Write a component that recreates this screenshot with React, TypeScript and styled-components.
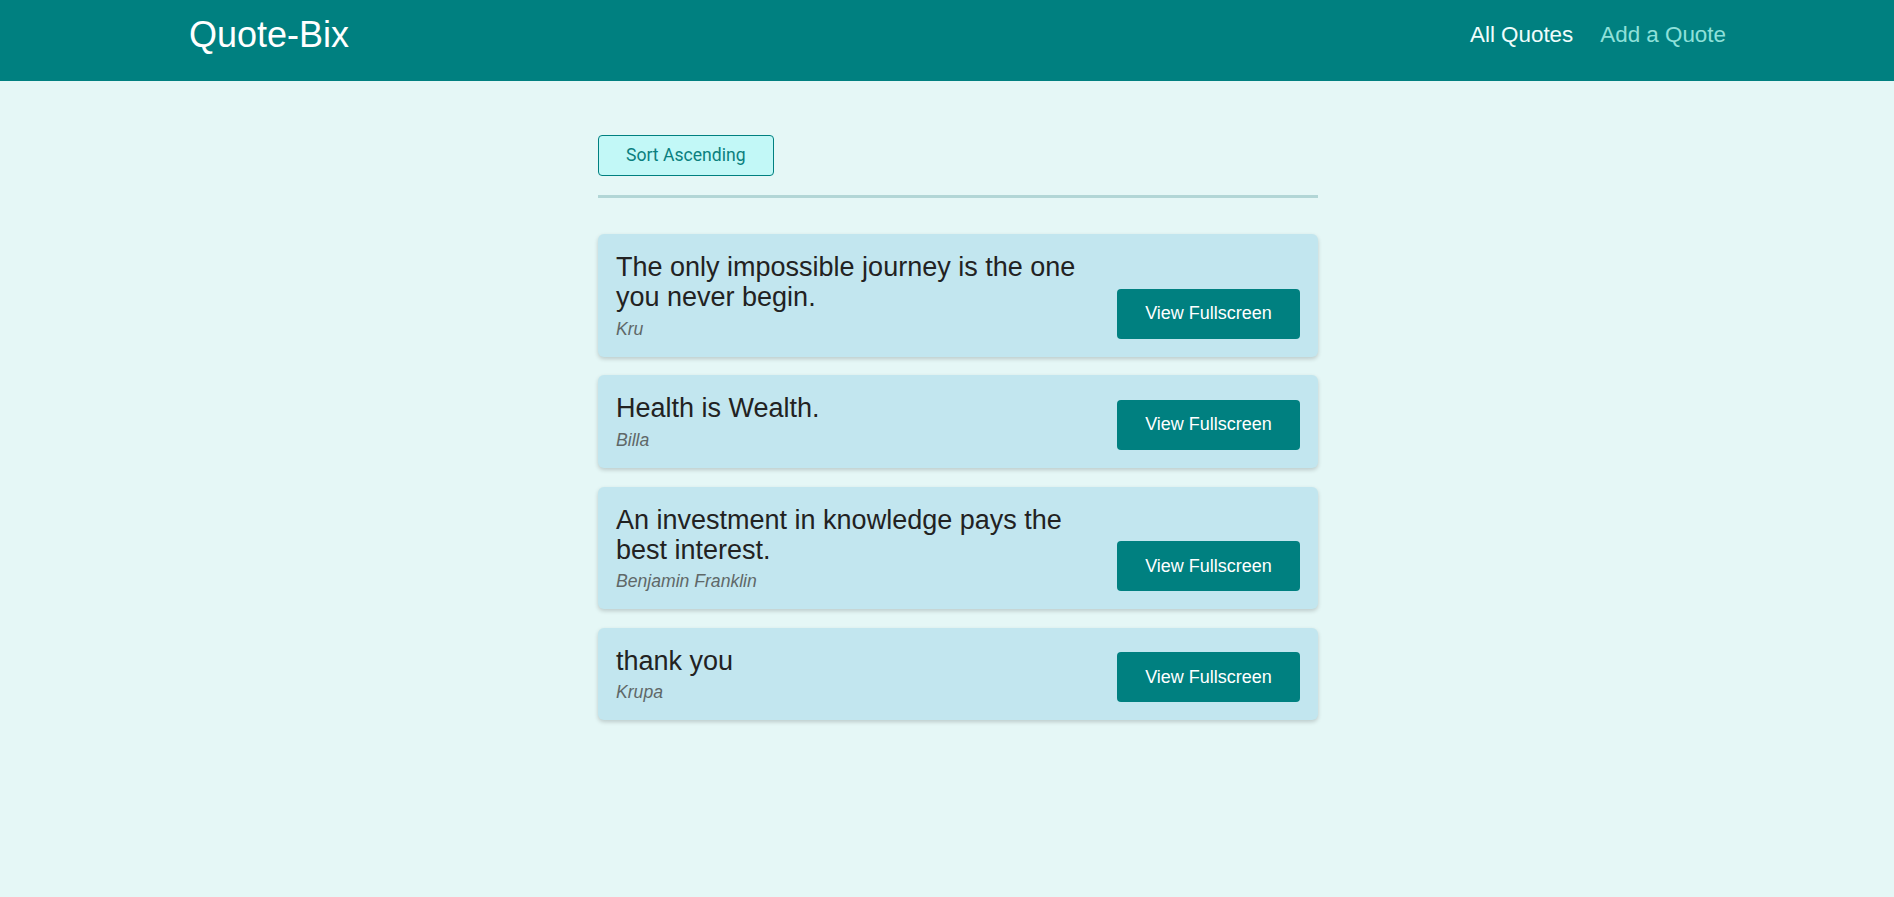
import React from "react";
import styled, { createGlobalStyle } from "styled-components";

const GlobalStyle = createGlobalStyle`
  * { box-sizing: border-box; }
  html, body {
    margin: 0;
    padding: 0;
    background: #e5f7f6;
    font-family: "Liberation Sans", Arial, sans-serif;
    min-height: 100%;
  }
`;

const Header = styled.header`
  height: 81px;
  background: #008080;
  display: flex;
  align-items: center;
  justify-content: space-between;
  padding: 0 168px 11px 189px;
`;

const Logo = styled.div`
  font-size: 36px;
  color: #ffffff;
  line-height: normal;
`;

const Nav = styled.nav`
  display: flex;
  gap: 27px;
`;

const NavLink = styled.a<{ $active?: boolean }>`
  font-size: 22.4px;
  text-decoration: none;
  color: ${(p) => (p.$active ? "#effdfc" : "#8fe0da")};
  cursor: pointer;
`;

const Main = styled.main`
  width: 742px;
  margin: 0 auto;
  padding: 54px 0 40px 22px;
`;

const SortBar = styled.div`
  padding-bottom: 19px;
  border-bottom: 3px solid #b2d6d6;
  margin-bottom: 36px;
`;

const SortButton = styled.button`
  font-family: Roboto, "Liberation Sans", sans-serif;
  font-size: 17.6px;
  line-height: 21px;
  padding: 9px 27px;
  color: #0a7f7e;
  background: #c2f8f7;
  border: 1px solid #008080;
  border-radius: 4px;
  cursor: pointer;
`;

const List = styled.ul`
  list-style: none;
  margin: 0;
  padding: 0;
  display: flex;
  flex-direction: column;
  gap: 18.8px;
`;

const Card = styled.li`
  display: flex;
  align-items: flex-end;
  justify-content: space-between;
  gap: 16px;
  padding: 18px;
  background: #c2e6ef;
  border-radius: 6px;
  box-shadow: 0 2px 4px rgba(0, 0, 0, 0.18);
`;

const Figure = styled.figure`
  flex: 1;
  margin: 0;
`;

const QuoteText = styled.blockquote`
  margin: 0 0 6.5px 0;
  font-size: 27px;
  line-height: 30px;
  color: #222;
`;

const Author = styled.figcaption`
  font-size: 17.6px;
  line-height: 20px;
  font-style: italic;
  color: #5f6868;
`;

const FullButton = styled.a`
  flex-shrink: 0;
  width: 183px;
  height: 50px;
  display: flex;
  align-items: center;
  justify-content: center;
  background: #008080;
  color: #ffffff;
  font-size: 18px;
  border-radius: 4px;
  text-decoration: none;
  cursor: pointer;
`;

const quotes = [
  { id: 1, text: "The only impossible journey is the one you never begin.", author: "Kru" },
  { id: 2, text: "Health is Wealth.", author: "Billa" },
  { id: 3, text: "An investment in knowledge pays the best interest.", author: "Benjamin Franklin" },
  { id: 4, text: "thank you", author: "Krupa" },
];

export default function App() {
  return (
    <>
      <GlobalStyle />
      <Header>
        <Logo>Quote-Bix</Logo>
        <Nav>
          <NavLink $active>All Quotes</NavLink>
          <NavLink>Add a Quote</NavLink>
        </Nav>
      </Header>
      <Main>
        <SortBar>
          <SortButton>Sort Ascending</SortButton>
        </SortBar>
        <List>
          {quotes.map((q) => (
            <Card key={q.id}>
              <Figure>
                <QuoteText>{q.text}</QuoteText>
                <Author>{q.author}</Author>
              </Figure>
              <FullButton>View Fullscreen</FullButton>
            </Card>
          ))}
        </List>
      </Main>
    </>
  );
}
